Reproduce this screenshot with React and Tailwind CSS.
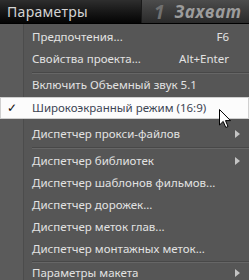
const items = [
  { label: "Предпочтения...", shortcut: "F6", h: "h-[22px]" },
  { label: "Свойства проекта...", shortcut: "Alt+Enter", h: "h-[22px]" },
  { sep: true },
  { label: "Включить Объемный звук 5.1", h: "h-[20px]" },
  { label: "Широкоэкранный режим (16:9)", checked: true, active: true },
  { label: "Диспетчер прокси-файлов", sub: true, h: "h-[22px]" },
  { sep: true },
  { label: "Диспетчер библиотек", sub: true, h: "h-[22px]" },
  { label: "Диспетчер шаблонов фильмов...", h: "h-[22px]" },
  { label: "Диспетчер дорожек...", h: "h-[22px]" },
  { label: "Диспетчер меток глав...", h: "h-[22px]" },
  { label: "Диспетчер монтажных меток...", h: "h-[21px]" },
  { sep: true },
  { label: "Параметры макета", sub: true, h: "h-[18px]" },
];

function Arrow() {
  return (
    <svg width="5" height="8" viewBox="0 0 5 8" className="absolute right-[9px]">
      <path d="M0 0 L5 4 L0 8 Z" fill="#c4c4c4" />
    </svg>
  );
}

function Cursor() {
  return (
    <svg width="13" height="20" viewBox="0 0 13 20" className="absolute left-[219px] top-[109px]">
      <path d="M0.5 0.5 L0.5 16 L4.2 12.4 L6.8 18.5 L9 17.5 L6.5 11.6 L11.5 11.6 Z" fill="#fff" stroke="#000" strokeWidth="1" strokeLinejoin="miter" />
    </svg>
  );
}

export default function App() {
  return (
    <div className="relative w-[249px] h-[280px] overflow-hidden bg-[#565656]" style={{ fontFamily: '"Noto Sans", "Liberation Sans", sans-serif' }}>
      {/* top bar */}
      <div className="flex h-[24px] border-b border-black">
        <div className="w-[141px] flex items-center pl-[7px] bg-gradient-to-b from-[#2e2e2e] to-[#050505] text-[#d4d4d4] text-[14px] leading-none tracking-[0.3px]">
          Параметры
        </div>
        <div className="flex-1 flex items-center pl-[12px] gap-[8px] bg-gradient-to-b from-[#4c4c4c] to-[#2a2a2a] border-l border-[#1a1a1a]">
          <span className="italic font-bold text-[19px] leading-[20px] pr-[2px] text-[#707070]">1</span>
          <span className="italic font-bold text-[17px] leading-[20px] text-[#9c9c9c] tracking-[0.8px]">Захват</span>
        </div>
      </div>

      {/* menu */}
      <div className="relative flex flex-col pt-[2px] text-[11.5px] leading-[16px] text-[#e2e2e2]">
        <div className="absolute left-0 top-0 bottom-0 w-[24px] bg-[#5b5b5b] border-r border-[#4c4c4c]" />
        {items.map((it, i) =>
          it.sep ? (
            <div key={i} className="relative h-[5px] flex items-center pl-[32px]">
              <div className="h-px w-full bg-[#484848] shadow-[0_1px_0_#666]" />
            </div>
          ) : it.active ? (
            <div key={i} className="relative h-[22px] mt-[2px] mb-[4px] flex items-center bg-[#fcfcfc] border border-[#cfcfcf] text-[#3c4554]">
              <span className="w-[31px] pl-[6px] text-[12px] text-[#111]">✓</span>
              <span>{it.label}</span>
            </div>
          ) : (
            <div key={i} className={`relative ${it.h} flex items-center pl-[32px] pr-[20px]`}>
              <span className="flex-1">{it.label}</span>
              {it.shortcut && <span>{it.shortcut}</span>}
              {it.sub && <Arrow />}
            </div>
          )
        )}
      </div>
      <Cursor />
    </div>
  );
}
